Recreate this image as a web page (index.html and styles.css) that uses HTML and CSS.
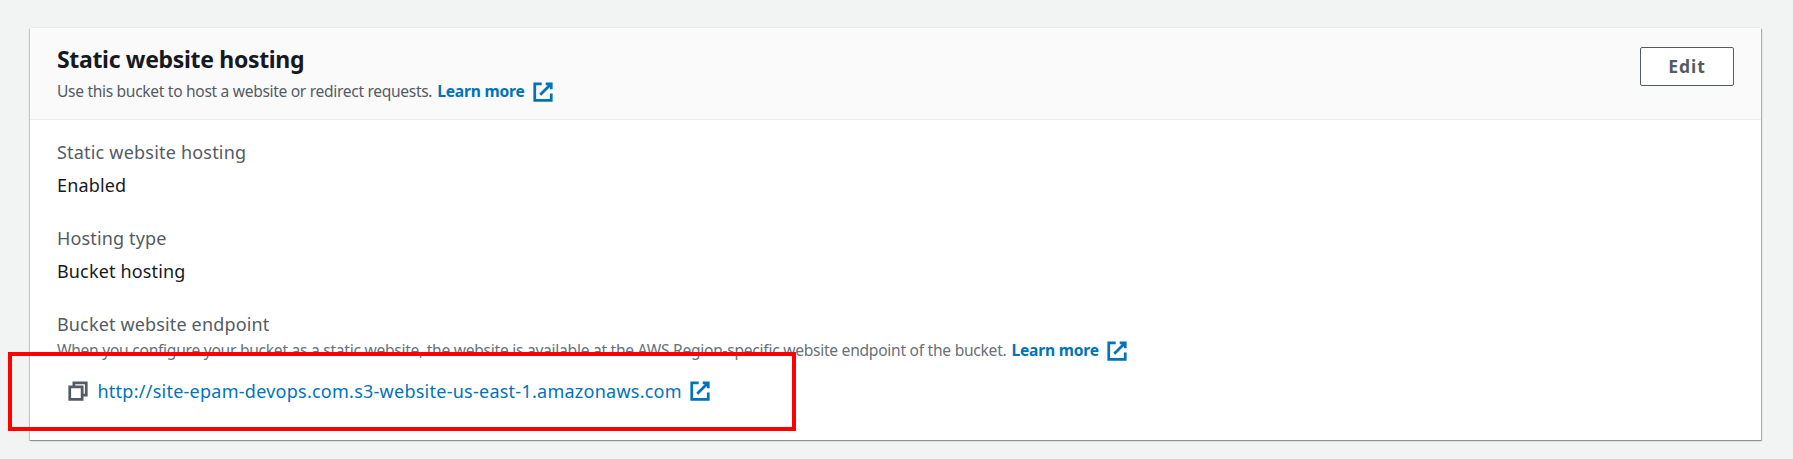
FILE: index.html
```
<!DOCTYPE html>
<html lang="en">
<head>
<meta charset="utf-8">
<title>Static website hosting</title>
<link rel="stylesheet" href="styles.css">
</head>
<body>
<svg class="defs" aria-hidden="true">
  <symbol id="external" viewBox="0 0 16 16">
    <path d="M10 2h4v4M6 10l8-8M14 9.05V14H2V2h5.04"/>
  </symbol>
  <symbol id="copy" viewBox="0 0 16 16">
    <path d="M2 5h9v9H2zM5 5V2h9v9h-3"/>
  </symbol>
</svg>
<main class="card">
  <header class="card-header">
    <div class="heading">
      <h2 class="title">Static website hosting</h2>
      <p class="description"><span class="description-text">Use this bucket to host a website or redirect requests.</span><a class="learn"><span>Learn more</span><svg class="icon"><use href="#external"/></svg></a></p>
    </div>
    <button class="edit">Edit</button>
  </header>
  <section class="card-body">
    <div class="field">
      <div class="label wide">Static website hosting</div>
      <div class="value">Enabled</div>
    </div>
    <div class="field">
      <div class="label">Hosting type</div>
      <div class="value">Bucket hosting</div>
    </div>
    <div class="field">
      <div class="label">Bucket website endpoint</div>
      <p class="help"><span class="help-text">When you configure your bucket as a static website, the website is available at the AWS Region-specific website endpoint of the bucket.</span><a class="learn"><span>Learn more</span><svg class="icon"><use href="#external"/></svg></a></p>
      <div class="url-row"><svg class="icon copy"><use href="#copy"/></svg><a class="url">http://site-epam-devops.com.s3-website-us-east-1.amazonaws.com</a><svg class="icon"><use href="#external"/></svg></div>
    </div>
  </section>
</main>
<div class="highlight"></div>
</body>
</html>
```
FILE: styles.css
```
* { box-sizing: border-box; }
body {
  margin: 0;
  height: 459px;
  padding: 28px 32px 0 30px;
  overflow: hidden;
  background: #f2f3f3;
  color: #16191f;
  font-family: "Noto Sans", "Open Sans", sans-serif;
}
.defs { position: absolute; width: 0; height: 0; }
.card {
  height: 412px;
  background: #fff;
  box-shadow: 0 -1px 0 #eaeded, 0 1px 0 #879596, 1px 1px 1px rgba(0, 28, 36, .3), -1px 1px 1px rgba(0, 28, 36, .2);
}
.card-header {
  display: flex;
  justify-content: space-between;
  align-items: flex-start;
  height: 92px;
  padding: 16px 27px 0 27px;
  background: #fafafa;
  border-bottom: 1px solid #eaeded;
}
.title {
  margin: 0;
  font-size: 23px;
  line-height: 30px;
  font-weight: 700;
  letter-spacing: -.33px;
  white-space: nowrap;
}
.description, .help {
  display: flex;
  align-items: center;
  margin: 0;
  font-size: 15.6px;
  line-height: 25px;
  white-space: nowrap;
}
.description { margin-top: 5px; color: #545b64; }
.description-text { letter-spacing: -.325px; }
.help { color: #687078; }
.help-text { letter-spacing: -.27px; }
.learn {
  display: flex;
  align-items: center;
  margin-left: 5px;
  color: #0073bb;
  font-weight: 700;
  letter-spacing: -.2px;
}
.icon {
  width: 22px;
  height: 22px;
  margin-left: 7px;
  fill: none;
  stroke: #0073bb;
  stroke-width: 2;
}
.edit {
  width: 94px;
  height: 39px;
  margin-top: 3px;
  padding: 0 0 1px;
  border: 1px solid #545b64;
  border-radius: 2px;
  background: #fff;
  color: #545b64;
  font: 700 17.5px/36px "Noto Sans", sans-serif;
  letter-spacing: 1px;
}
.card-body {
  display: flex;
  flex-direction: column;
  gap: 25px;
  padding: 18px 27px 0;
}
.field { white-space: nowrap; }
.label, .value { font-size: 18px; line-height: 28px; letter-spacing: .15px; }
.label { color: #545b64; }
.wide { letter-spacing: .2px; }
.value { margin-top: 5px; }
.url-row {
  display: flex;
  align-items: center;
  margin-top: 14px;
  padding-left: 9.5px;
  font-size: 18px;
  line-height: 28px;
}
.copy { margin: 0 9px 0 0; stroke: #545b64; }
.url { color: #0073bb; letter-spacing: .25px; }
.highlight {
  position: absolute;
  left: 8px;
  top: 352px;
  width: 788px;
  height: 79px;
  border: 4px solid #f00;
}
```
